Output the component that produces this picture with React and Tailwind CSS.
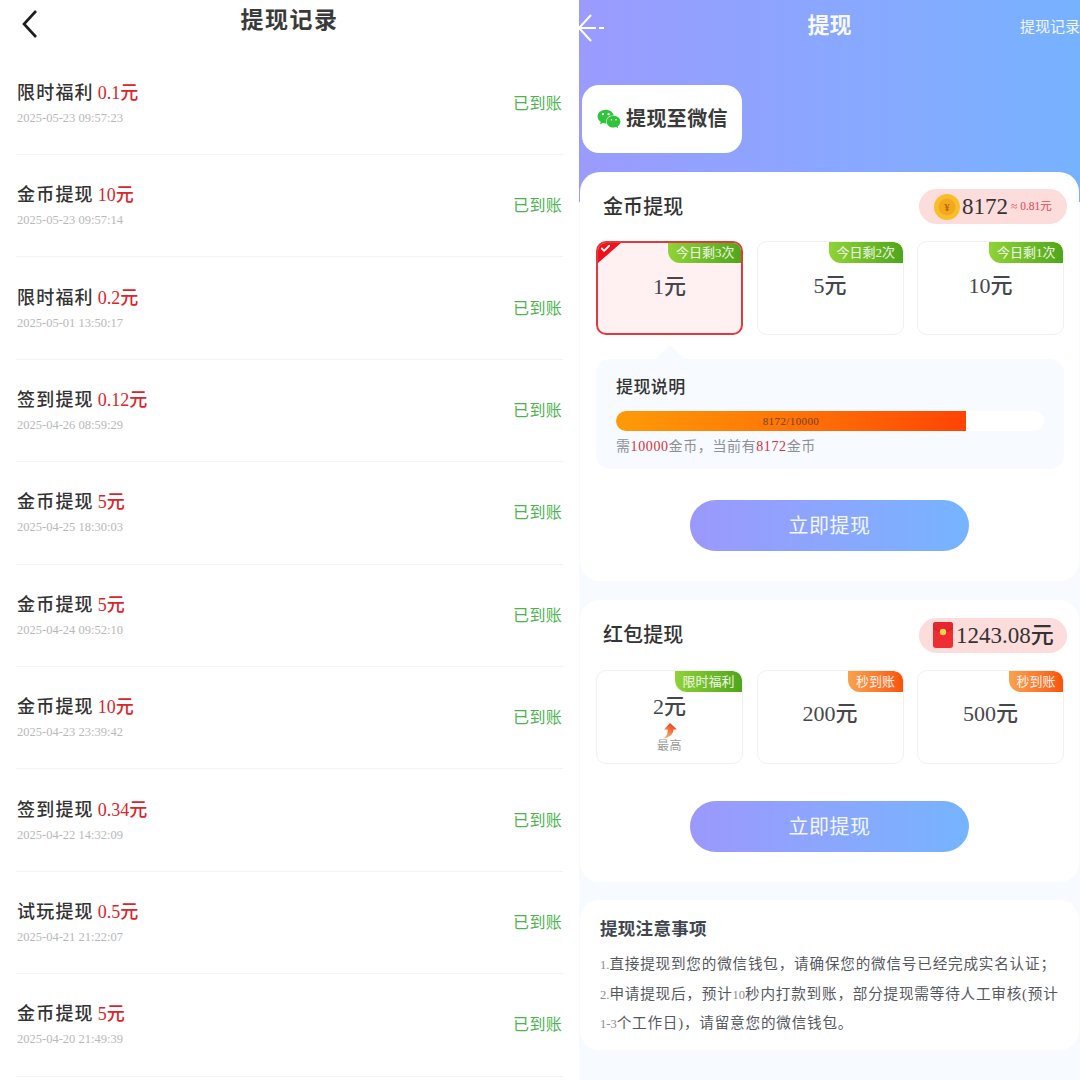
import React from "react";
import { FaWeixin } from "react-icons/fa";
import { Check } from "lucide-react";

const F = "font-['Liberation_Serif','Noto_Sans_CJK_SC',serif]";

const records = [
  ["限时福利", "0.1元", "2025-05-23 09:57:23"],
  ["金币提现", "10元", "2025-05-23 09:57:14"],
  ["限时福利", "0.2元", "2025-05-01 13:50:17"],
  ["签到提现", "0.12元", "2025-04-26 08:59:29"],
  ["金币提现", "5元", "2025-04-25 18:30:03"],
  ["金币提现", "5元", "2025-04-24 09:52:10"],
  ["金币提现", "10元", "2025-04-23 23:39:42"],
  ["签到提现", "0.34元", "2025-04-22 14:32:09"],
  ["试玩提现", "0.5元", "2025-04-21 21:22:07"],
  ["金币提现", "5元", "2025-04-20 21:49:39"],
];

function Row({ r }) {
  return (
    <div className="h-[102.4px] shrink-0 mx-[16px] flex items-center justify-between border-b border-[#f3f3f3] pl-[1px] pr-[1px]">
      <div className="flex flex-col">
        <div className="flex items-baseline h-[26px]">
          <span className="text-[18px] leading-[24px] font-medium text-[#333] tracking-[1.2px]">{r[0]}</span>
          <span className="ml-[4px] text-[18px] leading-[24px] font-medium text-[#d8262c]">{r[1]}</span>
        </div>
        <div className="text-[12.5px] leading-[16px] mt-[3px] text-[#b8b8b8]">{r[2]}</div>
      </div>
      <div className="text-[16px] leading-[22px] text-[#4cb350] mt-[1px] tracking-[0.3px]">已到账</div>
    </div>
  );
}

function Badge({ text, orange, selected }) {
  return (
    <div
      className={`absolute h-[21px] px-[7.5px] pb-[1px] flex items-center justify-center rounded-tr-[9px] rounded-bl-[12px] text-[13px] text-white/90 leading-none ${
        selected ? "-top-[1px] -right-[1px]" : "top-0 right-0"
      } ${
        orange
          ? "bg-gradient-to-r from-[#f9a24c] to-[#fa5207]"
          : "bg-gradient-to-r from-[#8fd336] to-[#4fa61a]"
      }`}
    >
      {text}
    </div>
  );
}

function Option({ amount, badge, orange, selected, extra, tight }) {
  return (
    <div
      className={`relative w-[147px] h-[94px] rounded-[10px] overflow-hidden flex flex-col items-center ${
        selected ? "border-2 border-[#e03a3e] bg-[#fff1f1]" : "border border-[#f1f1f4] bg-white"
      } ${extra ? "pt-[23px]" : tight ? "pt-[30px]" : "pt-[31px]"}`}
    >
      {selected && (
        <div className="absolute -top-[1px] -left-[1px] w-[25px] h-[22px] bg-[#f0111d] [clip-path:polygon(0_0,100%_0,0_100%)]">
          <Check className="absolute top-[1px] left-[3px] w-[11px] h-[11px] text-white" strokeWidth={4} />
        </div>
      )}
      <Badge text={badge} orange={orange} selected={selected} />
      <div className="text-[22px] leading-[26px] font-medium text-[#45474d]">{amount}</div>
      {extra && (
        <>
          <svg width="16" height="16" viewBox="0 0 16 16" className="mt-[3px]">
            <path d="M8 0 L15 6.5 L11.5 6.5 C11.5 11 7 15 1 15.5 C5 13.5 6 10.5 5.6 6.5 L2 6.5 Z" fill="url(#ar)" />
            <defs>
              <linearGradient id="ar" x1="0.7" y1="0" x2="0.2" y2="1">
                <stop offset="0" stopColor="#f23a1c" />
                <stop offset="1" stopColor="#fbb26a" />
              </linearGradient>
            </defs>
          </svg>
          <div className="text-[12px] leading-[14px] text-[#9a9a9a] tracking-[0.5px]">最高</div>
        </>
      )}
    </div>
  );
}

function SubmitButton() {
  return (
    <div className="mx-auto w-[279px] h-[51px] rounded-full bg-gradient-to-r from-[#9b98fc] to-[#75b4fe] flex items-center justify-center text-[20px] text-white/90 tracking-[0.5px]">
      立即提现
    </div>
  );
}

function Coin() {
  return (
    <svg width="26" height="26" viewBox="0 0 26 26" className="shrink-0">
      <circle cx="13" cy="13" r="13" fill="#f8bf2b" />
      <circle cx="13" cy="13" r="8.5" fill="#f3a81e" />
      <text x="13" y="17" fontSize="11" fill="#b4680a" textAnchor="middle" fontWeight="700">¥</text>
    </svg>
  );
}

function Packet() {
  return (
    <svg width="20" height="26" viewBox="0 0 20 26" className="shrink-0">
      <rect width="20" height="26" rx="3" fill="#ee2d35" />
      <path d="M0 6 Q10 14 20 6 L20 3 Q20 0 17 0 L3 0 Q0 0 0 3 Z" fill="#e32630" />
      <path d="M0 6 Q10 14 20 6" fill="none" stroke="#c81c24" strokeWidth="0.8" />
      <circle cx="10" cy="10" r="3.2" fill="#fbd24e" />
    </svg>
  );
}

const Sm = ({ children }) => <span className="text-[12.5px] tracking-[0px] text-[#8a8d92]">{children}</span>;

export default function App() {
  return (
    <div className={`flex w-[1080px] h-[1080px] overflow-hidden bg-white ${F}`}>
      {/* left */}
      <div className="w-[579px] shrink-0 h-full flex flex-col overflow-hidden bg-white">
        <div className="relative h-[52.6px] shrink-0 flex items-start justify-center">
          <svg width="20" height="28" viewBox="0 0 20 28" className="absolute left-[20px] top-[10px]">
            <path d="M16 1 L4 14 L16 27" fill="none" stroke="#1c1c1c" strokeWidth="2.6" />
          </svg>
          <div className="text-[23px] leading-[30px] mt-[6px] font-bold text-[#3a3a3a] tracking-[1.5px]">提现记录</div>
        </div>
        {records.map((r, i) => (
          <Row key={i} r={r} />
        ))}
      </div>

      {/* right */}
      <div className="w-[501px] shrink-0 h-full flex flex-col bg-[#f7faff] overflow-hidden">
        <div className="h-[202px] shrink-0 bg-gradient-to-r from-[#9a9bfe] to-[#76b2ff] relative">
          <svg width="28" height="30" viewBox="0 0 28 30" className="absolute left-0 top-[13px]">
            <path d="M12 2 L0 15 L12 28 M0 15 L17 15 M20 15 L25 15" fill="none" stroke="#fff" strokeWidth="2" />
          </svg>
          <div className="absolute left-0 right-0 top-[11px] text-center text-[22px] leading-[30px] font-bold text-white/95">提现</div>
          <div className="absolute right-0 top-[17px] text-[15px] leading-[20px] text-white/90 whitespace-nowrap">提现记录</div>
          <div className="absolute left-[3px] top-[85px] w-[160px] h-[68px] rounded-[17px] bg-white flex items-center pl-[15px]">
            <FaWeixin className="w-[24px] h-[24px] text-[#2fc43a] mr-[5px]" />
            <span className="text-[20px] font-bold text-[#3b3b3b] tracking-[0.4px]">提现至微信</span>
          </div>
        </div>

        <div className="mx-[1px] -mt-[30px] relative h-[409px] shrink-0 rounded-[20px] bg-white px-[16px]">
          <div className="h-[69px] flex items-center justify-between">
            <div className="pl-[7px] text-[20px] font-medium text-[#333] tracking-[0.1px]">金币提现</div>
            <div className="w-[148px] h-[35px] mr-[-4px] rounded-full bg-[#fddcdc] flex items-center pl-[15px]">
              <Coin />
              <span className="ml-[2px] text-[23px] font-medium leading-none text-[#333]">8172</span>
              <span className="ml-[3px] text-[11.5px] text-[#e0484f] leading-none whitespace-nowrap">≈ 0.81元</span>
            </div>
          </div>
          <div className="flex justify-between w-[468px]">
            <Option amount="1元" badge="今日剩3次" selected />
            <Option amount="5元" badge="今日剩2次" />
            <Option amount="10元" badge="今日剩1次" />
          </div>
          <div className="relative w-[468px] h-[110px] mt-[24px] rounded-[14px] bg-[#f7faff] pl-[20px]">
            <div className="absolute -top-[14px] left-[60px] w-[28px] h-[14px] bg-[#f7faff] [clip-path:polygon(50%_0,100%_100%,0_100%)]" />
            <div className="pt-[17px] text-[17px] leading-[24px] font-medium text-[#333] tracking-[0.4px]">提现说明</div>
            <div className="relative w-[428px] h-[20px] mt-[11px] rounded-full bg-white overflow-hidden">
              <div className="h-full w-[350px] bg-gradient-to-r from-[#ff9a08] to-[#ff4205] flex items-center justify-center text-[11px] text-[#6d4020] tracking-[0.4px]">
                8172/10000
              </div>
            </div>
            <div className="mt-[5px] text-[14px] leading-[22px] text-[#8d9096] tracking-[0.6px]">
              需<span className="text-[#d8323c]">10000</span>金币，当前有<span className="text-[#d8323c]">8172</span>金币
            </div>
          </div>
          <div className="mt-[31px]">
            <SubmitButton />
          </div>
        </div>

        <div className="mx-[1px] mt-[19px] h-[282px] shrink-0 rounded-[20px] bg-white px-[16px]">
          <div className="h-[70px] flex items-center justify-between">
            <div className="pl-[7px] text-[20px] font-medium text-[#333] tracking-[0.1px]">红包提现</div>
            <div className="w-[148px] h-[35px] mr-[-4px] rounded-full bg-[#fddcdc] flex items-center pl-[14px]">
              <Packet />
              <span className="ml-[3px] text-[23px] font-medium leading-none text-[#333] whitespace-nowrap">1243.08元</span>
            </div>
          </div>
          <div className="flex justify-between w-[468px]">
            <Option amount="2元" badge="限时福利" extra />
            <Option amount="200元" badge="秒到账" orange tight />
            <Option amount="500元" badge="秒到账" orange tight />
          </div>
          <div className="mt-[37px]">
            <SubmitButton />
          </div>
        </div>

        <div className="mx-[1px] mt-[18px] h-[150px] shrink-0 rounded-[20px] bg-white pl-[20px] pr-[10px] pt-[15px]">
          <div className="text-[17.5px] leading-[28px] font-bold text-[#40464f] tracking-[0.3px]">提现注意事项</div>
          <div className="mt-[7px] text-[14.6px] leading-[28.6px] text-[#55585e] tracking-[0.8px]">
            <div className="whitespace-nowrap"><Sm>1.</Sm>直接提现到您的微信钱包，请确保您的微信号已经完成实名认证；</div>
            <div className="whitespace-nowrap"><Sm>2.</Sm>申请提现后，预计<Sm>10</Sm>秒内打款到账，部分提现需等待人工审核(预计</div>
            <div className="whitespace-nowrap"><Sm>1-3</Sm>个工作日)，请留意您的微信钱包。</div>
          </div>
        </div>
      </div>
    </div>
  );
}
